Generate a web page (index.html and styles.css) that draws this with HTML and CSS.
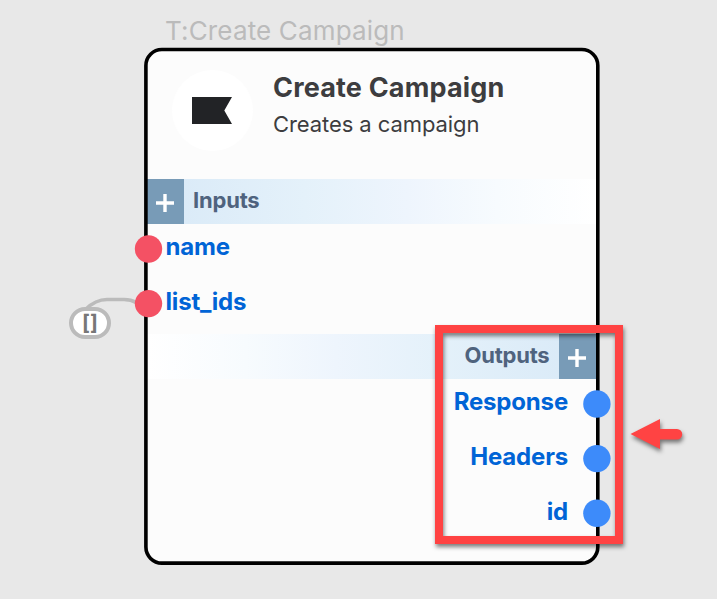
FILE: index.html
```html
<!DOCTYPE html>
<html lang="en">
<head>
<meta charset="utf-8">
<title>Create Campaign</title>
<link rel="stylesheet" href="styles.css">
</head>
<body>
<main class="canvas">
  <svg class="wire" width="80" height="30" viewBox="0 0 80 30"><path d="M15.5 19.500C23 12 29 9.500 37 9.500H54Q61 9.500 66 12.500" fill="none" stroke="#bbb" stroke-width="3.600"/></svg>
  <div class="literal"><span>[]</span></div>
  <article class="node">
    <div class="node-label">T:Create Campaign</div>
    <header class="head">
      <div class="avatar"><svg width="40" height="27" viewBox="0 0 40 27"><path d="M0 0H40L32.300 13.500L40 27H0Z" fill="#222326"/></svg></div>
      <div class="titles">
        <h1>Create Campaign</h1>
        <p>Creates a campaign</p>
      </div>
    </header>
    <section class="inputs">
      <div class="bar"><button class="add"><svg width="18" height="18" viewBox="0 0 18 18"><path d="M0 9H18M9 0V18" stroke="#fff" stroke-width="3.400"/></svg></button><h2>Inputs</h2></div>
      <div class="row"><span>name</span></div>
      <div class="row"><span>list_ids</span></div>
    </section>
    <section class="outputs">
      <div class="bar"><h2>Outputs</h2><button class="add"><svg width="18" height="18" viewBox="0 0 18 18"><path d="M0 9H18M9 0V18" stroke="#fff" stroke-width="3.400"/></svg></button></div>
      <div class="row"><span>Response</span></div>
      <div class="row"><span>Headers</span></div>
      <div class="row"><span>id</span></div>
    </section>
  </article>
  <svg class="frame" width="717" height="599" viewBox="0 0 717 599">
    <rect x="145.900" y="49.500" width="451.900" height="513.600" rx="16" fill="none" stroke="#000" stroke-width="3.600"/>
    <g fill="#f45164"><circle cx="148.500" cy="249" r="13.700"/><circle cx="148.500" cy="303.600" r="13.700"/></g>
    <g fill="#3d8bfa"><circle cx="596.900" cy="404" r="13.700"/><circle cx="596.900" cy="458.600" r="13.700"/><circle cx="596.900" cy="513.300" r="13.700"/></g>
  </svg>
  <svg class="callout" width="717" height="599" viewBox="0 0 717 599">
    <rect x="439" y="329" width="180" height="211" fill="none" stroke="#ff4343" stroke-width="8"/>
    <path d="M630.500 434L660 419V429H677A5.250 5.250 0 0 1 677 439.500H660V449Z" fill="#ff4343"/>
  </svg>
</main>
</body>
</html>
```
FILE: styles.css
```css
* { box-sizing: border-box; }
body { margin: 0; background: #e8e8e8; font-family: Inter, "Liberation Sans", sans-serif; }
.canvas { position: relative; width: 717px; height: 599px; overflow: hidden; }
h1, h2, p { margin: 0; white-space: nowrap; }
.wire { position: absolute; left: 70px; top: 290px; }
.literal {
  position: absolute; left: 69px; top: 306.500px; width: 42px; height: 32.500px;
  border: 4px solid #bbb; border-radius: 17px; background: #fff;
  display: flex; align-items: center; justify-content: center;
  font-size: 21px; font-weight: 700; line-height: 24px; color: #777;
}
.node {
  position: absolute; left: 146px; top: 50px; width: 452px; height: 513px;
  padding: 0 2px 0 1px; border-radius: 16px; background: #fcfcfc;
}
.node-label {
  position: absolute; left: 19px; top: -35px; white-space: nowrap;
  font-size: 26px; letter-spacing: .15px; line-height: 32px; color: #bbb;
}
.head { display: flex; height: 129px; padding: 20px 0 0 24.500px; }
.avatar {
  width: 81px; height: 81px; border-radius: 50%; background: #fff;
  display: flex; align-items: center; justify-content: center;
}
.titles { margin-left: 20.500px; color: #3d3d3f; }
h1 { font-size: 27px; letter-spacing: .18px; line-height: 34px; font-weight: 700; padding-top: 1px; }
.titles p { font-size: 22px; letter-spacing: -.08px; line-height: 28px; margin-top: 5px; }
.bar { display: flex; height: 45.300px; background: linear-gradient(90deg, #d8e9f7, #e4f1fa 35%, #eef5fd 58%, #f7fbfe 78%, #fff); }
.outputs .bar { justify-content: flex-end; background: linear-gradient(270deg, #d8e9f7, #e4f1fa 35%, #eef5fd 58%, #f7fbfe 78%, #fff); }
.bar h2 { font-size: 22px; line-height: 43px; font-weight: 700; letter-spacing: -.2px; color: #4f637e; margin: 0 9.500px; }
.add {
  width: 36.500px; border: 0; padding: 3px 0 0; background: #789bb7;
  display: flex; align-items: center; justify-content: center;
}
.outputs .add { width: 37px; padding-right: 1px; }
.row { height: 54.800px; padding: 8px 18.500px 0; font-size: 24px; line-height: 30px; font-weight: 700; letter-spacing: -.18px; color: #0064d6; }
.outputs .row { text-align: right; padding-right: 28px; }
.frame, .callout { position: absolute; left: 0; top: 0; pointer-events: none; }
.callout { filter: drop-shadow(1px 3px 2px rgba(0, 0, 0, .5)); }
```
